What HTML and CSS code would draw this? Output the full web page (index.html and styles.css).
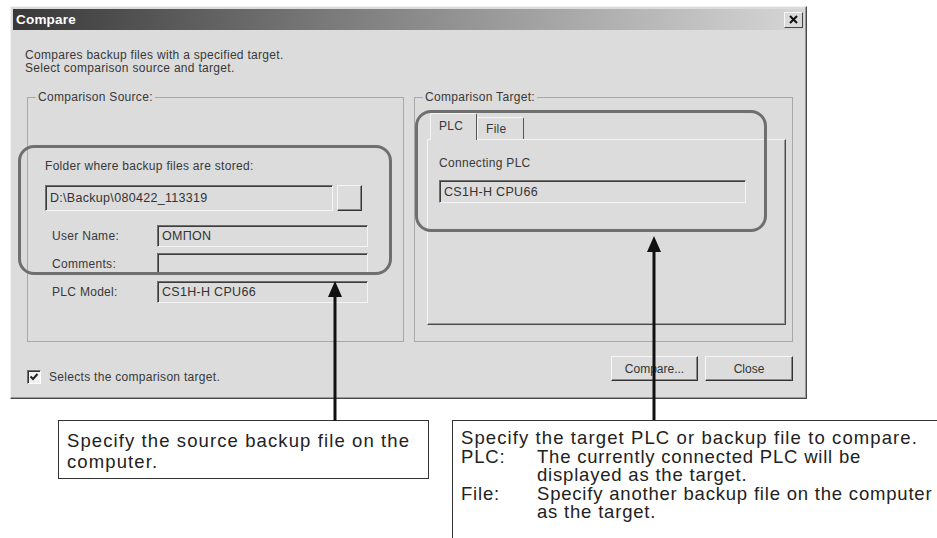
FILE: index.html
```html
<!DOCTYPE html>
<html>
<head>
  <title>Compare</title>
  <link rel="stylesheet" href="styles.css">
</head>
<body>
  <div class="page">
    <div class="dialog">
      <div class="titlebar">
        <span class="title">Compare</span>
        <span class="close-btn">
          <svg width="10" height="9" viewBox="0 0 10 9"><path d="M1 1 L8 8 M8 1 L1 8" stroke="#111" stroke-width="2"/></svg>
        </span>
      </div>

      <div class="dlg-body">
        <p class="intro">Compares backup files with a specified target.<br>Select comparison source and target.</p>

        <div class="groups">
          <fieldset class="group source">
            <legend>Comparison Source:</legend>
            <div class="src-body">
              <div class="folder-label">Folder where backup files are stored:</div>
              <div class="folder-row">
                <div class="field folder-field">D:\Backup\080422_113319</div>
                <div class="browse"></div>
              </div>
              <div class="info-rows">
                <div class="info-row"><span class="info-label">User Name:</span><div class="field info-field">OMПON</div></div>
                <div class="info-row"><span class="info-label">Comments:</span><div class="field info-field"></div></div>
                <div class="info-row"><span class="info-label">PLC Model:</span><div class="field info-field">CS1H-H CPU66</div></div>
              </div>
            </div>
          </fieldset>

          <fieldset class="group target">
            <legend>Comparison Target:</legend>
            <div class="tgt-body">
              <div class="tabs">
                <div class="tab active">PLC</div>
                <div class="tab">File</div>
              </div>
              <div class="tab-panel">
                <div class="conn-label">Connecting PLC</div>
                <div class="field conn-field">CS1H-H CPU66</div>
              </div>
            </div>
          </fieldset>
        </div>

        <div class="footer">
          <label class="check">
            <span class="check-box">
              <svg width="10" height="10" viewBox="0 0 10 10"><path d="M1.5 4.5 L4 7 L8.5 2" fill="none" stroke="#222" stroke-width="2"/></svg>
            </span>
            Selects the comparison target.
          </label>
          <div class="buttons">
            <button class="btn">Compare...</button>
            <button class="btn">Close</button>
          </div>
        </div>
      </div>
    </div>

    <div class="callouts">
      <div class="callout callout-left">Specify the source backup file on the computer.</div>
      <div class="callout callout-right">
        <div>Specify the target PLC or backup file to compare.</div>
        <div class="note"><span>PLC:</span><span>The currently connected PLC will be<br>displayed as the target.</span></div>
        <div class="note"><span>File:</span><span>Specify another backup file on the computer<br>as the target.</span></div>
      </div>
    </div>

    <!-- highlight marks and arrows drawn over the dialog -->
    <div class="mark mark-source"></div>
    <div class="mark mark-target"></div>
    <svg class="arrows" width="937" height="538">
      <line x1="335" y1="295" x2="335" y2="421" stroke="#111" stroke-width="3"/>
      <polygon points="328,297 342,297 335,281" fill="#111"/>
      <line x1="654" y1="250" x2="654" y2="420" stroke="#111" stroke-width="3"/>
      <polygon points="647,252 661,252 654,236" fill="#111"/>
    </svg>
  </div>
</body>
</html>
```

FILE: styles.css
```css
body { margin: 0; background: #fff; overflow: hidden; }
.page { position: relative; width: 937px; height: 538px; overflow: hidden; font-family: "Liberation Sans", Arial, sans-serif; }

/* dialog window */
.dialog { margin: 6px 0 0 10px; width: 797px; height: 393px; box-sizing: border-box; padding: 2px;
  background: #dcdcdc; border: 1px solid; border-color: #f2f2f2 #4a4a4a #4a4a4a #f2f2f2;
  box-shadow: inset -1px -1px 0 #9a9a9a; font-size: 12px; letter-spacing: 0.3px; color: #383838; }
.titlebar { height: 21px; display: flex; align-items: center; justify-content: space-between;
  background: linear-gradient(to right, #383838, #7a7a7a 40%, #d6d6d6); padding-left: 3px; }
.title { color: #fff; font-weight: bold; font-size: 13.5px; letter-spacing: 0.2px; }
.close-btn { width: 19px; height: 16px; margin-right: 1px; box-sizing: border-box; display: flex; align-items: center; justify-content: center;
  background: #dadada; border: 1px solid; border-color: #f6f6f6 #444 #444 #f6f6f6; }

.dlg-body { padding: 0 11px 0 12px; }
.intro { margin: 19px 0 0; line-height: 12.5px; }

.groups { display: flex; gap: 10px; margin: 17px 0 0 2px; }
.group { margin: 0; padding: 0; min-width: 0; height: 251px; box-sizing: border-box; border: 1px solid #a8a8a8; }
.group legend { margin-left: 8px; padding: 0 2px; line-height: 12px; }
.source { width: 377px; }
.target { width: 379px; }

/* source panel */
.src-body { padding: 57px 0 0 17px; }
.folder-label { line-height: 12px; }
.folder-row { display: flex; gap: 4px; margin-top: 13px; }
.field { box-sizing: border-box; border: 1px solid; border-color: #6e6e6e #f4f4f4 #f4f4f4 #6e6e6e;
  box-shadow: inset 1px 1px 0 #3c3c3c; background: #dcdcdc; padding: 0 4px; display: flex; align-items: center;
  color: #333; font-size: 12.5px; white-space: nowrap; }
.folder-field { width: 288px; height: 26px; }
.browse { width: 25px; height: 26px; box-sizing: border-box; border: 1px solid; border-color: #f4f4f4 #333 #333 #f4f4f4;
  box-shadow: inset -1px -1px 0 #888; background: #dcdcdc; }
.info-rows { display: flex; flex-direction: column; gap: 6px; margin-top: 14px; padding-left: 7px; }
.info-row { display: flex; align-items: center; }
.info-label { width: 105px; }
.info-field { width: 211px; height: 22px; }

/* target panel */
.tgt-body { padding: 10px 0 0 12px; }
.tabs { display: flex; align-items: flex-end; padding-left: 3px; height: 26px; }
.tab { width: 47px; height: 22px; box-sizing: border-box; padding: 4px 0 0 8px; background: #dcdcdc;
  border: 1px solid; border-bottom: none; border-color: #f4f4f4 #555 #555 #f4f4f4; border-radius: 2px 2px 0 0; }
.tab.active { padding-top: 5px; position: relative; z-index: 1; margin-bottom: -1px; height: 27px; }
.tab-panel { width: 359px; height: 186px; box-sizing: border-box; border: 1px solid; border-color: #f4f4f4 #4a4a4a #4a4a4a #f4f4f4;
  box-shadow: inset -1px -1px 0 #9a9a9a; padding: 17px 0 0 11px; }
.conn-label { line-height: 12px; }
.conn-field { width: 307px; height: 23px; margin-top: 11px; }

/* footer */
.footer { display: flex; justify-content: space-between; align-items: flex-start; margin: 14px 0 0 2px; }
.check { display: flex; align-items: center; gap: 8px; margin-top: 14px; }
.check-box { width: 14px; height: 14px; box-sizing: border-box; border: 1px solid; border-color: #6e6e6e #fff #fff #6e6e6e;
  box-shadow: inset 1px 1px 0 #333; background: #f0f0f0; display: flex; align-items: center; justify-content: center; }
.buttons { display: flex; gap: 7px; }
.btn { width: 87px; height: 25px; padding: 0; font: inherit; color: #333; background: #dcdcdc;
  border: 1px solid; border-color: #f6f6f6 #333 #333 #f6f6f6; box-shadow: inset -1px -1px 0 #8a8a8a; }
.btn + .btn { width: 88px; }

/* callout boxes under the screenshot */
.callouts { display: flex; align-items: flex-start; margin-top: 21px; font-size: 18.5px; letter-spacing: 1.1px; line-height: 18.5px; color: #222; }
.callout { flex: none; box-sizing: border-box; border: 1.5px solid #333; background: #fff; }
.callout-left { margin-left: 58px; width: 371px; height: 59px; padding: 9px 6px 0 8px; line-height: 21px; }
.callout-right { margin-left: 23px; width: 500px; height: 140px; padding: 8px 0 0 8px; }
.note { display: flex; white-space: nowrap; letter-spacing: 0.8px; }
.note span:first-child { width: 76px; flex: none; }

/* annotation overlays */
.mark { position: absolute; border: 3px solid #6f6f6f; border-radius: 16px; }
.mark-source { left: 18px; top: 145px; width: 368px; height: 124px; }
.mark-target { left: 415px; top: 110px; width: 346px; height: 116px; }
.arrows { position: absolute; left: 0; top: 0; pointer-events: none; }
```
